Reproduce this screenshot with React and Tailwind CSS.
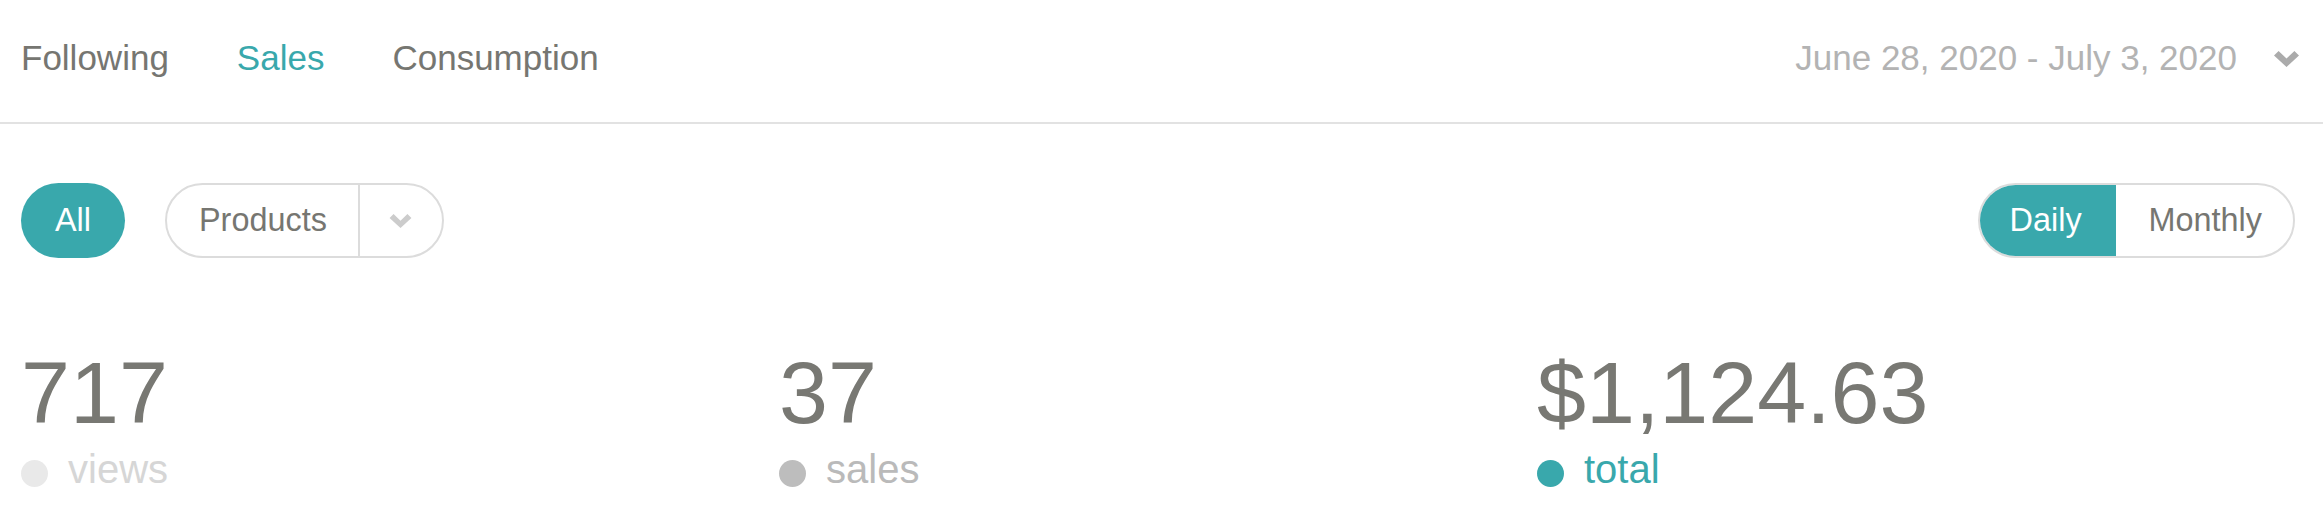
import React, { useState } from 'react';

const tabs = ['Following', 'Sales', 'Consumption'];

const stats = [
  { value: '717', label: 'views', dot: 'bg-[#e9e9e9]', text: 'text-[#d6d6d6]' },
  { value: '37', label: 'sales', dot: 'bg-[#bdbdbd]', text: 'text-[#bababa]' },
  { value: '$1,124.63', label: 'total', dot: 'bg-[#39a8ac]', text: 'text-[#39a8ac]' },
];

// thick chevron, like the font-awesome one
const Chevron = ({ className }) => (
  <svg viewBox="0 0 25 16" className={className} fill="currentColor">
    <polygon points="0,4.6 4.6,0 12.5,7.6 20.4,0 25,4.6 12.5,16" />
  </svg>
);

const App = () => {
  const [tab, setTab] = useState('Sales');
  const [period, setPeriod] = useState('Daily');

  return (
    <div className="w-[2323px] h-[523px] bg-white font-['Liberation_Sans',Arial,sans-serif] text-[#767671]">
      {/* top tabs + date range */}
      <div className="h-[124px] flex items-center border-b-2 border-[#e2e2e2] pl-[21px] pr-[24px]">
        <div className="flex items-center gap-[68px] mb-[8px]">
          {tabs.map((t) => (
            <button
              key={t}
              onClick={() => setTab(t)}
              className={`text-[35px] leading-none ${tab === t ? 'text-[#39a8ac]' : 'text-[#767671]'}`}
            >
              {t}
            </button>
          ))}
        </div>
        <div className="ml-auto flex items-center gap-[37px] text-[#b3b3b3] mb-[8px]">
          <span className="text-[35px] leading-none">June 28, 2020 - July 3, 2020</span>
          <Chevron className="w-[25px] h-[16px] mt-[4px] text-[#ababab]" />
        </div>
      </div>

      {/* filters */}
      <div className="flex items-center justify-between pl-[21px] pr-[28px] mt-[59px]">
        <div className="flex items-center gap-[40px]">
          <button className="h-[75px] px-[34px] rounded-full bg-[#39a8ac] text-white text-[32.4px] leading-none">
            All
          </button>
          <div className="h-[75px] flex items-stretch rounded-full border-2 border-[#dcdcdc]">
            <span className="flex items-center pl-[32px] pr-[31px] text-[32.4px] leading-none">Products</span>
            <span className="w-[84px] flex items-center justify-center border-l-2 border-[#dcdcdc]">
              <Chevron className="w-[23px] h-[14px] text-[#cccccc]" />
            </span>
          </div>
        </div>
        <div className="h-[75px] flex items-stretch rounded-full border-2 border-[#dcdcdc] overflow-hidden">
          {['Daily', 'Monthly'].map((p) => (
            <button
              key={p}
              onClick={() => setPeriod(p)}
              className={`flex items-center text-[32.4px] leading-none ${
                period === p ? 'bg-[#39a8ac] text-white pl-[32px] pr-[34px] -my-[2px] -ml-[2px]' : 'text-[#767671] pl-[33px] pr-[31px]'
              }`}
            >
              {p}
            </button>
          ))}
        </div>
      </div>

      {/* stats */}
      <div className="grid grid-cols-3 pl-[21px] pr-[28px] mt-[91px]">
        {stats.map((s) => (
          <div key={s.label} className="flex flex-col">
            <div className="text-[88px] leading-none text-[#787873]">{s.value}</div>
            <div className="flex items-center gap-[20px] mt-[12px]">
              <span className={`w-[27px] h-[27px] rounded-full mt-[8px] ${s.dot}`} />
              <span className={`text-[40px] leading-none ${s.text}`}>{s.label}</span>
            </div>
          </div>
        ))}
      </div>
    </div>
  );
};

export default App;
